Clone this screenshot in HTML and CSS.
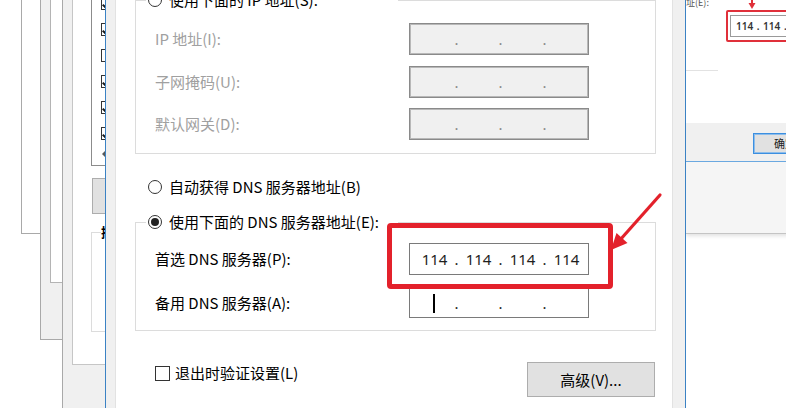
FILE: index.html
```html
<!DOCTYPE html>
<html lang="zh-CN">
<head>
<meta charset="utf-8">
<title>Internet 协议版本 4 (TCP/IPv4) 属性</title>
<link rel="stylesheet" href="styles.css">
</head>
<body>
<div class="desktop">
  <div class="win win-a"></div>
  <div class="win win-b"><div class="tab-c"></div></div>
  <div class="win win-d">
    <div class="tab-e">
      <div class="listbox">
        <span class="mini-chk on"></span>
        <span class="mini-chk on"></span>
        <span class="mini-chk"></span>
        <span class="mini-chk on"></span>
        <span class="mini-chk on"></span>
        <span class="mini-chk on"></span>
        <svg class="scroll-arrow" width="8" height="10" viewBox="0 0 8 10"><path d="M6 1 L2 5 L6 9 Z" fill="#5a5a5a"/></svg>
      </div>
      <div class="btn-small"></div>
      <div class="desc-box"><span class="desc-label">描</span></div>
    </div>
  </div>

  <div class="win win-r">
    <div class="r-caption">址(E):</div>
    <div class="r-line"></div>
    <div class="r-footer"><span class="r-btn">确定</span></div>
    <div class="r-bottom"></div>
    <div class="r-highlight"><div class="r-input">114 . 114 . 114 . 114</div></div>
    <svg class="r-arrow" width="10" height="12" viewBox="0 0 10 12"><path d="M5 0 V6" stroke="#e0303a" stroke-width="2"/><path d="M1.5 4 L5 10 L8.5 4 Z" fill="#e0303a"/></svg>
  </div>

  <div class="win dlg">
    <div class="tabpage">
      <fieldset class="group group-ip">
        <legend class="radio-row"><span class="radio"></span>使用下面的 IP 地址(S):</legend>
        <div class="field-grid grid-ip">
          <span class="lbl disabled">IP 地址(I):</span>
          <div class="ipbox disabled"><span class="oct"></span><span class="dot">.</span><span class="oct"></span><span class="dot">.</span><span class="oct"></span><span class="dot">.</span><span class="oct"></span></div>
          <span class="lbl disabled">子网掩码(U):</span>
          <div class="ipbox disabled"><span class="oct"></span><span class="dot">.</span><span class="oct"></span><span class="dot">.</span><span class="oct"></span><span class="dot">.</span><span class="oct"></span></div>
          <span class="lbl disabled">默认网关(D):</span>
          <div class="ipbox disabled"><span class="oct"></span><span class="dot">.</span><span class="oct"></span><span class="dot">.</span><span class="oct"></span><span class="dot">.</span><span class="oct"></span></div>
        </div>
      </fieldset>

      <div class="radio-row standalone"><span class="radio"></span>自动获得 DNS 服务器地址(B)</div>

      <fieldset class="group group-dns">
        <legend class="radio-row"><span class="radio checked"></span>使用下面的 DNS 服务器地址(E):</legend>
        <div class="field-grid grid-dns">
          <span class="lbl">首选 DNS 服务器(P):</span>
          <div class="ipbox"><span class="oct">114</span><span class="dot">.</span><span class="oct">114</span><span class="dot">.</span><span class="oct">114</span><span class="dot">.</span><span class="oct">114</span></div>
          <span class="lbl">备用 DNS 服务器(A):</span>
          <div class="ipbox"><span class="oct"><span class="caret"></span></span><span class="dot">.</span><span class="oct"></span><span class="dot">.</span><span class="oct"></span><span class="dot">.</span><span class="oct"></span></div>
        </div>
      </fieldset>

      <div class="footer-row">
        <div class="check-row"><span class="checkbox"></span>退出时验证设置(L)</div>
        <button class="btn">高级(V)...</button>
      </div>
    </div>
  </div>

  <div class="highlight"></div>
  <svg class="arrow" width="70" height="70" viewBox="0 0 70 70">
    <path d="M60 10 L20 55" stroke="#e3212b" stroke-width="3.2" stroke-linecap="round"/>
    <path d="M11 65 L27.5 58 L16.5 48 Z" fill="#e3212b"/>
  </svg>
</div>
</body>
</html>
```

FILE: styles.css
```css
* { box-sizing: border-box; }

html, body {
  margin: 0;
  padding: 0;
  background: #ffffff;
}

body {
  font-family: "Noto Sans CJK SC", "Noto Sans", sans-serif;
  font-size: 15px;
  line-height: 20px;
  color: #000;
}

.desktop {
  position: relative;
  width: 786px;
  height: 408px;
  overflow: hidden;
  background: #ffffff;
}

.win {
  position: absolute;
}

/* background windows on the left */
.win-a {
  left: 21px;
  top: -2px;
  width: 100px;
  height: 236px;
  background: #ffffff;
  border: 1px solid #a9a9a9;
}

.win-b {
  left: 40px;
  top: -2px;
  width: 120px;
  height: 342px;
  background: #f0f0f0;
  border: 1px solid #a9a9a9;
}

.tab-c {
  margin-left: 9px;
  margin-top: -1px;
  width: 80px;
  height: 285px;
  background: #ffffff;
  border: 1px solid #b4b4b4;
}

.win-d {
  left: 62px;
  top: -10px;
  width: 120px;
  height: 430px;
  background: #f0f0f0;
  border-left: 1px solid #a9a9a9;
}

.tab-e {
  margin-left: 9px;
  width: 80px;
  height: 375px;
  background: #ffffff;
  border: 1px solid #c6c6c6;
  padding-left: 18px;
  display: flex;
  flex-direction: column;
}

.listbox {
  width: 50px;
  height: 175px;
  border: 1px solid #8c8c8c;
  padding: 5px 0 0 9px;
  display: flex;
  flex-direction: column;
  gap: 13px;
  flex: none;
}

.mini-chk {
  display: block;
  width: 13px;
  height: 13px;
  border: 1px solid #333;
  background: #fff;
  flex: none;
  position: relative;
}

.mini-chk.on::after {
  content: "";
  position: absolute;
  left: 2px;
  top: 2px;
  width: 3px;
  height: 6px;
  border-right: 2px solid #1a1a1a;
  border-bottom: 2px solid #1a1a1a;
  transform: rotate(40deg);
}

.scroll-arrow {
  margin-top: -4px;
  margin-left: -1px;
}

.btn-small {
  margin-top: 12px;
  margin-left: 1px;
  width: 40px;
  height: 36px;
  background: #e1e1e1;
  border: 1px solid #adadad;
  flex: none;
}

.desc-box {
  margin-top: 18px;
  width: 50px;
  height: 100px;
  border: 1px solid #dcdcdc;
  flex: none;
  position: relative;
}

.desc-label {
  display: block;
  margin-top: -9px;
  margin-left: 9px;
  font-size: 13px;
  font-weight: 700;
  line-height: 16px;
  background: #fff;
  width: 16px;
}

/* right window */
.win-r {
  left: 686px;
  top: -2px;
  width: 110px;
  height: 236px;
  background: #ffffff;
  border-bottom: 1px solid #c4c4c4;
  box-shadow: 0 2px 4px rgba(0, 0, 0, 0.12);
  display: flex;
  flex-direction: column;
}

.r-caption {
  font-size: 9px;
  line-height: 10px;
  color: #555;
  padding-left: 0;
  margin-top: 0;
}

.r-line {
  margin-top: 62px;
  width: 32px;
  height: 1px;
  background: #e2e2e2;
}

.r-footer {
  margin-top: 52px;
  height: 38px;
  background: #f0f0f0;
  padding: 10px 0 0 67px;
}

.r-btn {
  display: block;
  width: 60px;
  height: 21px;
  background: #e1e1e1;
  border: 1px solid #3c8fe0;
  box-shadow: inset 0 0 0 1px #8dbdeb;
  font-size: 11px;
  line-height: 19px;
  padding-left: 20px;
  color: #222;
}

.r-bottom {
  flex: 1;
  background: #f5f5f5;
  border-top: 1px solid #6aa8e0;
}

.r-highlight {
  position: absolute;
  left: 40px;
  top: 12px;
  width: 80px;
  height: 32px;
  border: 2px solid #e0303a;
  border-radius: 2px;
  padding: 3px 0 0 2px;
}

.r-input {
  height: 22px;
  border: 1px solid #9a9a9a;
  font-family: "Noto Sans", sans-serif;
  font-size: 10px;
  font-weight: 600;
  line-height: 20px;
  color: #333;
  padding-left: 5px;
  white-space: nowrap;
  word-spacing: 1px;
}

.r-arrow {
  position: absolute;
  left: 61px;
  top: 1px;
}

/* main dialog */
.dlg {
  left: 105px;
  top: -40px;
  width: 581px;
  height: 460px;
  background: #f0f0f0;
  border-left: 1px solid #3b82c4;
  border-right: 1px solid #3b82c4;
  padding-left: 9px;
}

.tabpage {
  width: 558px;
  height: 460px;
  background: #ffffff;
  border: 1px solid #e2e2e2;
  border-top: none;
  padding: 30px 0 0 19px;
}

.group {
  width: 521px;
  margin: 0;
  padding: 0;
  border: 1px solid #dcdcdc;
  min-width: 0;
}

.radio-row {
  display: flex;
  align-items: center;
  height: 20px;
  white-space: nowrap;
  color: #000;
}

legend.radio-row {
  width: 252px;
  padding: 0;
  margin-left: 10px;
  background: #ffffff;
}

.radio {
  width: 14px;
  height: 14px;
  border: 1px solid #333;
  border-radius: 50%;
  background: #fff;
  margin-left: 2px;
  margin-right: 7px;
  flex: none;
  display: flex;
  align-items: center;
  justify-content: center;
}

.radio.checked::after {
  content: "";
  width: 8px;
  height: 8px;
  border-radius: 50%;
  background: #222;
}

.standalone {
  margin-top: 23px;
  margin-left: 11px;
}

.group-dns {
  margin-top: 15px;
}

.field-grid {
  display: grid;
  grid-template-columns: 254px 180px;
  align-items: center;
  padding-left: 19px;
}

.grid-ip {
  grid-template-rows: 32px 32px 32px;
  row-gap: 10.5px;
  padding-top: 13px;
  padding-bottom: 13px;
}

.grid-dns {
  grid-template-rows: 32px 30px;
  row-gap: 13px;
  padding-top: 11px;
  padding-bottom: 12px;
}

.lbl {
  white-space: nowrap;
  color: #000;
}

.lbl.disabled {
  color: #a0a0a0;
}

.ipbox {
  height: 100%;
  border: 1px solid #7a7a7a;
  background: #ffffff;
  display: flex;
  align-items: center;
  padding-left: 7.5px;
  font-family: "Noto Sans", sans-serif;
  font-size: 15px;
  color: #1e1e1e;
}

.ipbox.disabled {
  background: #f0f0f0;
  border-color: #8a8a8a;
  box-shadow: inset 0 0 0 1px #b8b8b8;
  color: #8a8a8a;
}

.oct {
  width: 34px;
  text-align: center;
  flex: none;
  display: flex;
  justify-content: center;
  align-items: center;
  height: 20px;
}

.dot {
  width: 10px;
  text-align: center;
  flex: none;
}

.caret {
  display: block;
  width: 2px;
  height: 19px;
  background: #000;
  margin-left: -2px;
}

.footer-row {
  width: 521px;
  margin-top: 31px;
  padding: 0 1px 0 20px;
  display: flex;
  justify-content: space-between;
  align-items: flex-start;
}

.check-row {
  display: flex;
  align-items: center;
  height: 20px;
  margin-top: 1px;
  white-space: nowrap;
}

.checkbox {
  width: 15px;
  height: 15px;
  border: 1px solid #333;
  background: #fff;
  margin-right: 5px;
  flex: none;
}

.btn {
  width: 128px;
  height: 35px;
  background: #e1e1e1;
  border: 1px solid #adadad;
  font-family: "Noto Sans CJK SC", "Noto Sans", sans-serif;
  font-size: 15px;
  color: #000;
  padding: 0;
}

/* annotation overlays */
.highlight {
  position: absolute;
  left: 387px;
  top: 223px;
  width: 226px;
  height: 66px;
  border: 5px solid #e3212b;
  border-radius: 4px;
}

.arrow {
  position: absolute;
  left: 600px;
  top: 185px;
}
```
